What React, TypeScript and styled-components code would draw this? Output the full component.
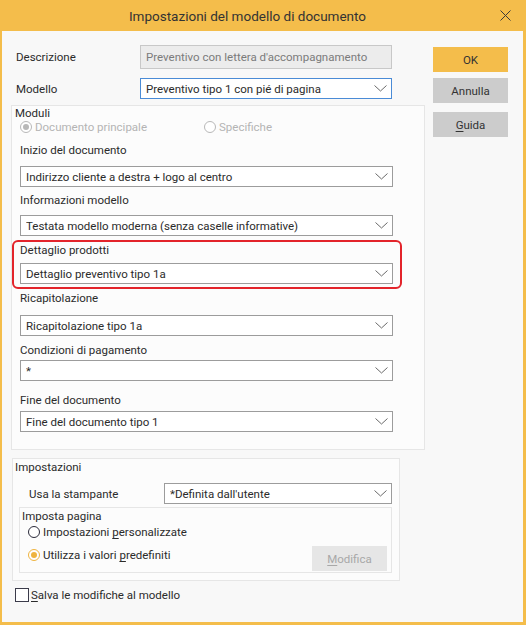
import styled, { createGlobalStyle } from "styled-components";

const GlobalStyle = createGlobalStyle`
  html, body {
    margin: 0;
    padding: 0;
    background: #ffffff;
  }
  body {
    font-family: Roboto, "Noto Sans", sans-serif;
    font-size: 11.5px;
    line-height: 16px;
    color: #2b2b2b;
  }
`;

const orange = "#f4bd4b";

const Window = styled.div`
  width: 526px;
  height: 625px;
  box-sizing: border-box;
  border: solid ${orange};
  border-width: 0 3px 3px 2px;
  background: #f8f8f8;
  display: flex;
  flex-direction: column;
`;

const TitleBar = styled.div`
  height: 31px;
  flex-shrink: 0;
  background: ${orange};
  display: flex;
  align-items: center;
  margin: 0 -3px 0 -2px;
`;

const Title = styled.div`
  flex: 1;
  text-align: center;
  font-size: 13.5px;
  color: #333;
`;

const CloseButton = styled.div`
  width: 31px;
  height: 31px;
  display: flex;
  align-items: center;
  padding-left: 5px;
  box-sizing: border-box;
`;

const Body = styled.div`
  display: flex;
  gap: 8px;
  padding: 14px 0 0 9px;
`;

const LeftColumn = styled.div`
  width: 414px;
  display: flex;
  flex-direction: column;
`;

const RightColumn = styled.div`
  display: flex;
  flex-direction: column;
  padding-top: 2px;
`;

const Button = styled.div<{ $variant?: "primary" | "default" | "disabled"; $gap?: number }>`
  width: 75px;
  height: 25px;
  display: flex;
  align-items: center;
  justify-content: center;
  margin-top: ${(p) => p.$gap ?? 0}px;
  background: ${(p) =>
    p.$variant === "primary" ? orange : p.$variant === "disabled" ? "#e6e6e6" : "#cccccc"};
  color: ${(p) => (p.$variant === "disabled" ? "#a8a8a8" : "#333")};
  u {
    text-underline-offset: 2px;
  }
`;

const FormRow = styled.div<{ $gap?: number }>`
  display: flex;
  align-items: center;
  margin-top: ${(p) => p.$gap ?? 0}px;
`;

const RowLabel = styled.div`
  width: 124px;
  margin-left: 5px;
`;

const TextBox = styled.div`
  width: 252px;
  height: 24px;
  box-sizing: border-box;
  border: 1px solid #c8c8c8;
  background: #ececec;
  color: #7b7b7b;
  display: flex;
  align-items: center;
  padding-left: 5px;
  white-space: nowrap;
  overflow: hidden;
`;

const Combo = styled.div<{ $width: number; $focused?: boolean }>`
  width: ${(p) => p.$width}px;
  height: 21px;
  flex-shrink: 0;
  box-sizing: border-box;
  border: 1px solid ${(p) => (p.$focused ? "#4a8bd6" : "#9c9c9c")};
  background: #ffffff;
  display: flex;
  align-items: center;
  padding: 0 4px 0 5px;
  color: #2b2b2b;
  span {
    flex: 1;
    white-space: nowrap;
    overflow: hidden;
  }
`;

const Panel = styled.div<{ $width: number }>`
  width: ${(p) => p.$width}px;
  box-sizing: border-box;
  border: 1px solid #e6e6e6;
  background: #fcfcfc;
`;

const ModuliPanel = styled(Panel)`
  margin-top: 6px;
  padding: 0 0 17px 8px;
`;

const GroupTitle = styled.div<{ $indent?: number }>`
  line-height: 14px;
  margin-left: ${(p) => p.$indent ?? -5}px;
`;

const RadioRow = styled.div`
  display: flex;
  height: 14px;
  align-items: center;
`;

const RadioItem = styled.label<{ $disabled?: boolean; $width?: number }>`
  display: flex;
  align-items: center;
  gap: 3px;
  width: ${(p) => (p.$width ? `${p.$width}px` : "auto")};
  color: ${(p) => (p.$disabled ? "#b4b4b4" : "#2b2b2b")};
  u {
    text-underline-offset: 2px;
  }
`;

const RadioCircle = styled.span<{ $checked?: boolean; $color: string }>`
  width: 12px;
  height: 12px;
  box-sizing: border-box;
  border-radius: 50%;
  border: 1px solid ${(p) => p.$color};
  background: #fff;
  display: flex;
  align-items: center;
  justify-content: center;
  &::after {
    content: "";
    display: ${(p) => (p.$checked ? "block" : "none")};
    width: 6px;
    height: 6px;
    border-radius: 50%;
    background: ${(p) => p.$color};
  }
`;

const Field = styled.div<{ $top: number; $labelGap: number }>`
  margin-top: ${(p) => p.$top}px;
  display: flex;
  flex-direction: column;
  gap: ${(p) => p.$labelGap}px;
`;

const Highlight = styled.div`
  width: 390px;
  box-sizing: border-box;
  margin: 4px 0 0 -8px;
  border: 2px solid #e3242b;
  border-radius: 6px;
  padding: 0 7px 3px 6px;
`;

const SettingsPanel = styled(Panel)`
  margin-top: 8px;
  margin-left: 1px;
  height: 123px;
  padding: 1px 7px 0 2px;
`;

const PrinterRow = styled.div`
  display: flex;
  align-items: center;
  margin-top: 9px;
  padding-left: 14px;
`;

const PrinterLabel = styled.div`
  width: 137px;
`;

const PageBox = styled.div`
  margin: 3px 0 0 4px;
  height: 66px;
  box-sizing: border-box;
  border: 1px solid #e6e6e6;
  padding: 1px 4px 0 2px;
  display: flex;
  flex-direction: column;
`;

const PageRadios = styled.div`
  display: flex;
  flex-direction: column;
  padding-left: 6px;
`;

const PageRadioRow = styled.div<{ $top: number }>`
  display: flex;
  justify-content: space-between;
  align-items: flex-start;
  margin-top: ${(p) => p.$top}px;
  label {
    padding-top: 1px;
  }
`;

const CheckRow = styled.label`
  display: flex;
  align-items: center;
  gap: 2px;
  margin: 6px 0 0 4px;
  u {
    text-underline-offset: 2px;
  }
`;

const CheckBox = styled.span`
  width: 14px;
  height: 14px;
  box-sizing: border-box;
  border: 1px solid #3b3b4a;
  background: #fff;
`;

function Chevron() {
  return (
    <svg width="13" height="7" viewBox="0 0 13 7">
      <polyline points="0.5,0.5 6.5,6 12.5,0.5" fill="none" stroke="#6a6a6a" strokeWidth="1" />
    </svg>
  );
}

function CloseIcon() {
  return (
    <svg width="11" height="11" viewBox="0 0 11 11">
      <path d="M0.5 0.5 L10.5 10.5 M10.5 0.5 L0.5 10.5" stroke="#3a3a3a" strokeWidth="1" />
    </svg>
  );
}

function ComboBox({ value, width = 373, focused }: { value: string; width?: number; focused?: boolean }) {
  return (
    <Combo $width={width} $focused={focused}>
      <span>{value}</span>
      <Chevron />
    </Combo>
  );
}

interface IField {
  label: string;
  value: string;
  top: number;
  gap: number;
}

const fieldsBefore: IField[] = [
  { label: "Inizio del documento", value: "Indirizzo cliente a destra + logo al centro", top: 8, gap: 8 },
  { label: "Informazioni modello", value: "Testata modello moderna (senza caselle informative)", top: 5, gap: 7 },
];

const fieldsAfter: IField[] = [
  { label: "Ricapitolazione", value: "Ricapitolazione tipo 1a", top: 1, gap: 9 },
  { label: "Condizioni di pagamento", value: "*", top: 6, gap: 2 },
  { label: "Fine del documento", value: "Fine del documento tipo 1", top: 11, gap: 3 },
];

function ModuleField({ field }: { field: IField }) {
  return (
    <Field $top={field.top} $labelGap={field.gap}>
      <div>{field.label}</div>
      <ComboBox value={field.value} />
    </Field>
  );
}

export default function App() {
  return (
    <>
      <GlobalStyle />
      <Window>
        <TitleBar>
          <Title>Impostazioni del modello di documento</Title>
          <CloseButton>
            <CloseIcon />
          </CloseButton>
        </TitleBar>
        <Body>
          <LeftColumn>
            <FormRow>
              <RowLabel>Descrizione</RowLabel>
              <TextBox>Preventivo con lettera d'accompagnamento</TextBox>
            </FormRow>
            <FormRow $gap={9}>
              <RowLabel>Modello</RowLabel>
              <ComboBox value="Preventivo tipo 1 con pié di pagina" width={252} focused />
            </FormRow>

            <ModuliPanel $width={414}>
              <GroupTitle>Moduli</GroupTitle>
              <RadioRow>
                <RadioItem $disabled $width={184}>
                  <RadioCircle $checked $color="#b8b8b8" />
                  Documento principale
                </RadioItem>
                <RadioItem $disabled>
                  <RadioCircle $color="#b8b8b8" />
                  Specifiche
                </RadioItem>
              </RadioRow>
              {fieldsBefore.map((f) => (
                <ModuleField key={f.label} field={f} />
              ))}
              <Highlight>
                <ModuleField field={{ label: "Dettaglio prodotti", value: "Dettaglio preventivo tipo 1a", top: 0, gap: 5 }} />
              </Highlight>
              {fieldsAfter.map((f) => (
                <ModuleField key={f.label} field={f} />
              ))}
            </ModuliPanel>

            <SettingsPanel $width={388}>
              <GroupTitle $indent={0}>Impostazioni</GroupTitle>
              <PrinterRow>
                <PrinterLabel>Usa la stampante</PrinterLabel>
                <ComboBox value="*Definita dall'utente" width={228} />
              </PrinterRow>
              <PageBox>
                <GroupTitle $indent={0}>Imposta pagina</GroupTitle>
                <PageRadios>
                  <PageRadioRow $top={0}>
                    <RadioItem>
                      <RadioCircle $color="#2b2b3a" />
                      <span>
                        Impostazioni <u>p</u>ersonalizzate
                      </span>
                    </RadioItem>
                  </PageRadioRow>
                  <PageRadioRow $top={6}>
                    <RadioItem>
                      <RadioCircle $checked $color="#efb43f" />
                      <span>
                        Utilizza i valori <u>p</u>redefiniti
                      </span>
                    </RadioItem>
                    <Button $variant="disabled">
                      <span>
                        <u>M</u>odifica
                      </span>
                    </Button>
                  </PageRadioRow>
                </PageRadios>
              </PageBox>
            </SettingsPanel>

            <CheckRow>
              <CheckBox />
              <span>
                <u>S</u>alva le modifiche al modello
              </span>
            </CheckRow>
          </LeftColumn>

          <RightColumn>
            <Button $variant="primary">OK</Button>
            <Button $gap={6}>Annulla</Button>
            <Button $gap={9}>
              <span>
                <u>G</u>uida
              </span>
            </Button>
          </RightColumn>
        </Body>
      </Window>
    </>
  );
}
